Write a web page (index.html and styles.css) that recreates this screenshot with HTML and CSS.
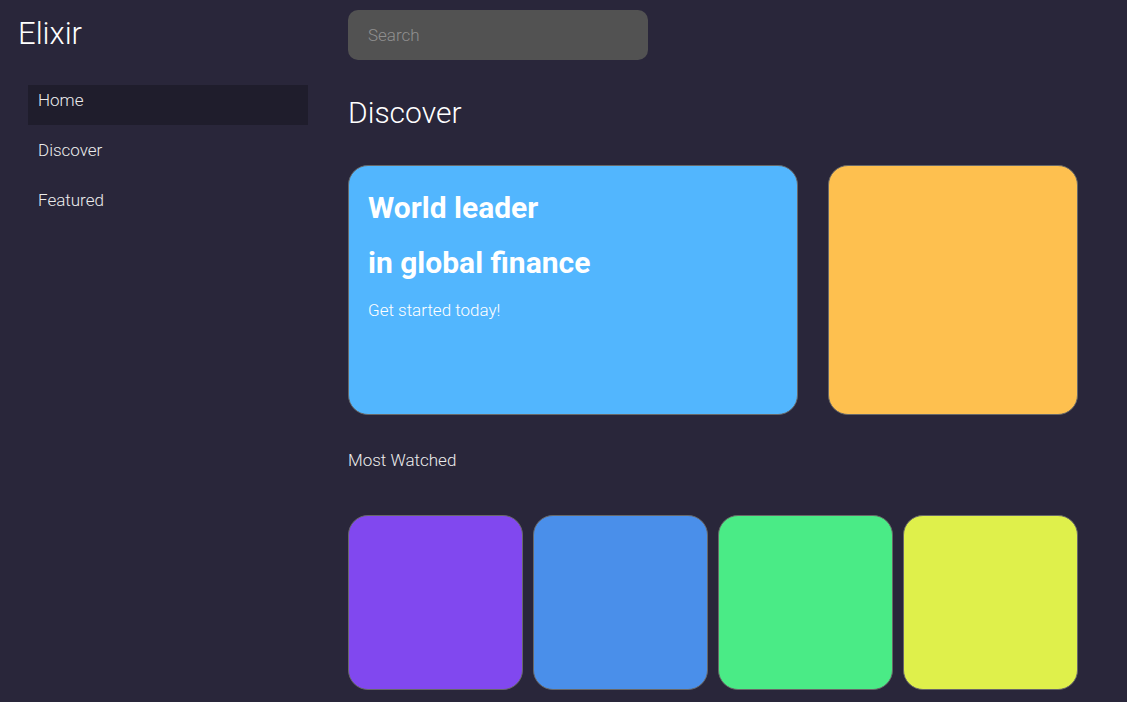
FILE: index.html
```html
<!DOCTYPE html>
<html lang="en">
<head>
<meta charset="utf-8">
<title>Elixir</title>
<link rel="stylesheet" href="styles.css">
</head>
<body>
<div class="app">
  <aside class="sidebar">
    <div class="logo">Elixir</div>
    <nav class="nav">
      <a class="nav-item active">Home</a>
      <a class="nav-item">Discover</a>
      <a class="nav-item">Featured</a>
    </nav>
  </aside>
  <main class="main">
    <div class="search">Search</div>
    <h1 class="title">Discover</h1>
    <div class="hero-row">
      <div class="card hero">
        <h2 class="hero-title">World leader</h2>
        <h2 class="hero-title">in global finance</h2>
        <p class="hero-sub">Get started today!</p>
      </div>
      <div class="card side"></div>
    </div>
    <div class="section-label">Most Watched</div>
    <div class="tiles">
      <div class="card tile purple"></div>
      <div class="card tile blue"></div>
      <div class="card tile green"></div>
      <div class="card tile yellow"></div>
    </div>
  </main>
</div>
</body>
</html>
```
FILE: styles.css
```css
* { box-sizing: border-box; }
html, body { margin: 0; padding: 0; }
body {
  background: #29263a;
  font-family: Roboto, "Liberation Sans", sans-serif;
  color: #fff;
  overflow: hidden;
}
.app { display: flex; }
.sidebar {
  width: 348px;
  flex: none;
  padding: 16px 40px 0 18px;
}
.logo {
  font-size: 31px;
  font-weight: 300;
  line-height: 36px;
}
.nav {
  display: flex;
  flex-direction: column;
  gap: 10px;
  margin: 33px 0 0 10px;
}
.nav-item {
  display: block;
  height: 40px;
  padding: 5px 10px 0;
  font-size: 17px;
  font-weight: 300;
  color: #ececec;
}
.nav-item.active { background: #1f1d2c; }
.main {
  width: 730px;
  padding-top: 10px;
}
.search {
  width: 300px;
  height: 50px;
  background: #525252;
  border-radius: 10px;
  padding: 0 20px;
  display: flex;
  align-items: center;
  font-size: 17px;
  font-weight: 300;
  color: #8f8f8f;
}
.title {
  margin: 35px 0 0;
  font-size: 30px;
  font-weight: 300;
  line-height: 36px;
}
.hero-row {
  display: flex;
  gap: 30px;
  margin-top: 34px;
}
.card {
  border: 1px solid #686868;
  border-radius: 20px;
}
.hero {
  width: 450px;
  height: 250px;
  background: #52b6fe;
  padding: 14px 19px;
}
.hero-title {
  margin: 0;
  font-size: 30px;
  font-weight: 700;
  line-height: 55px;
}
.hero-sub {
  margin: 10px 0 0;
  font-size: 17px;
  font-weight: 300;
}
.side {
  width: 250px;
  height: 250px;
  background: #fec04f;
}
.section-label {
  margin-top: 35px;
  font-size: 17px;
  font-weight: 300;
  color: #ececec;
}
.tiles {
  display: flex;
  gap: 10px;
  margin-top: 45px;
}
.tile { width: 175px; height: 175px; }
.purple { background: #8148ef; }
.blue { background: #4a8fea; }
.green { background: #4aeb86; }
.yellow { background: #dff04b; }
```
